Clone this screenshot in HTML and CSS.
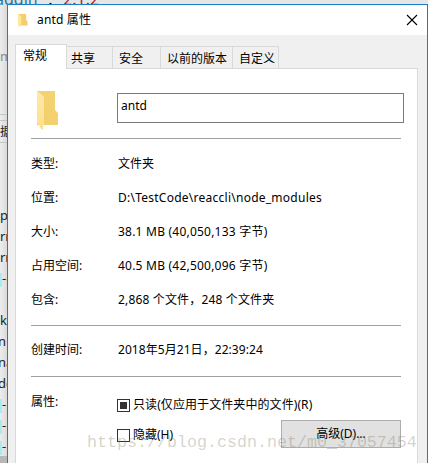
FILE: index.html
```html
<!DOCTYPE html>
<html lang="zh-CN">

<head>
	<meta charset="UTF-8">
	<meta name="viewport" content="width=device-width, initial-scale=1.0">
	<title>antd 属性</title>
	<link rel="stylesheet" href="styles.css">
</head>

<body>

	<!-- editor window behind the dialog -->
	<div class="editor">
		<div class="code-top"><span class="key">addin"</span> : <span class="str">"2.1.2"</span></div>
		<div class="scrap faded" style="top: 46px">m</div>
		<div class="panel-line" style="top: 114px"></div>
		<div class="panel-line" style="top: 120px"></div>
		<div class="scrap cjk" style="top: 121px">据</div>
		<div class="panel-line" style="top: 142px"></div>
		<div class="scrap" style="top: 205px">p</div>
		<div class="scrap" style="top: 226px">rr</div>
		<div class="scrap" style="top: 247px">rr</div>
		<div class="scrap" style="top: 268px"><i></i>-c</div>
		<div class="scrap" style="top: 310px">k</div>
		<div class="scrap cut" style="top: 331px">n</div>
		<div class="scrap cut" style="top: 352px">na</div>
		<div class="scrap cut" style="top: 373px">de</div>
		<div class="scrap" style="top: 394px"><i></i>-</div>
		<div class="scrap" style="top: 415px"><i></i>-</div>
		<div class="scrap" style="top: 436px"><i></i>-</div>
		<div class="scrap selected" style="top: 456px"></div>
	</div>

	<div class="dialog">
		<div class="titlebar">
			<svg class="title-icon" width="10" height="13" viewBox="0 0 22 40" preserveAspectRatio="none">
				<path fill="#f2cf6b" d="M0 0h18v19l3 3v13H0z" />
				<path fill="#ffe69c" d="M0 0l7 6v30l-2 4-5-6z" />
			</svg>
			<span class="title">antd 属性</span>
			<svg class="close" width="12" height="12" viewBox="0 0 12 12">
				<path d="M1 1l10 10M11 1L1 11" stroke="#000" stroke-width="1.1" />
			</svg>
		</div>

		<div class="tabs">
			<div class="tab active">常规</div>
			<div class="tab tab-share">共享</div>
			<div class="tab tab-security">安全</div>
			<div class="tab tab-versions">以前的版本</div>
			<div class="tab tab-custom">自定义</div>
		</div>

		<div class="pane">
			<div class="name-row">
				<svg class="folder" width="22" height="40" viewBox="0 0 22 40">
					<defs>
						<linearGradient id="back" x1="0" y1="1" x2="1" y2="0">
							<stop offset="0" stop-color="#f2cf69" />
							<stop offset="1" stop-color="#f4d375" />
						</linearGradient>
						<linearGradient id="front" x1="0" y1="0" x2="0" y2="1">
							<stop offset="0" stop-color="#ffe9a8" />
							<stop offset="1" stop-color="#fde08a" />
						</linearGradient>
					</defs>
					<path fill="url(#back)" d="M0 0h18v19l3 3v12H0z" />
					<path fill="url(#front)" d="M0 0l5 4 2 2v28l-1 1v4l-2-1-2-4-2-2z" />
				</svg>
				<input class="name" type="text" value="antd">
			</div>
			<div class="line"></div>
			<div class="row row-type"><span class="label">类型:</span><span>文件夹</span></div>
			<div class="row"><span class="label">位置:</span><span class="path">D:\TestCode\reaccli\node_modules</span></div>
			<div class="row"><span class="label">大小:</span><span class="size">38.1 MB (40,050,133 字节)</span></div>
			<div class="row"><span class="label">占用空间:</span><span class="size">40.5 MB (42,500,096 字节)</span></div>
			<div class="row"><span class="label">包含:</span><span class="count">2,868 个文件，248 个文件夹</span></div>
			<div class="line"></div>
			<div class="row row-date"><span class="label">创建时间:</span><span class="date">2018年5月21日，22:39:24</span></div>
			<div class="line"></div>
			<div class="attributes">
				<span class="label">属性:</span>
				<div class="options">
					<div class="option"><span class="check mixed"></span><span class="readonly">只读(仅应用于文件夹中的文件)(R)</span></div>
					<div class="option"><span class="check"></span><span>隐藏(H)</span></div>
				</div>
				<button class="advanced" type="button">高级(D)...</button>
			</div>
		</div>
	</div>

	<div class="watermark">https://blog.csdn.net/m0_37057454</div>

</body>

</html>
```

FILE: styles.css
```css
* {
	box-sizing: border-box;
}

body {
	margin: 0;
	position: relative;
	width: 428px;
	height: 463px;
	overflow: hidden;
	background-color: #e9e9e9;
	font-family: "Noto Sans", "Noto Sans CJK SC", sans-serif;
	font-size: 12px;
	line-height: 18px;
	color: #000;
}

/* editor behind the dialog */
.editor {
	position: absolute;
	inset: 0;
	overflow: hidden;
	background: linear-gradient(to right, #ededed, #d8d8d8 8px, #e6e6e6 20px);
}

.code-top {
	position: absolute;
	top: -10px;
	left: -5px;
	font-size: 16px;
	line-height: 18px;
	white-space: pre;
}

.key {
	color: #2878a0;
}

.str {
	color: #b01830;
}

.scrap {
	position: absolute;
	left: 0;
	width: 8px;
	height: 20px;
	overflow: hidden;
	white-space: nowrap;
	font-size: 13px;
	line-height: 21px;
	color: #222;
}

.scrap i {
	display: inline-block;
	width: 2px;
	height: 14px;
	background-color: #a5ecf4;
	vertical-align: middle;
}

.scrap.cut {
	text-indent: -2px;
}

.scrap.cjk {
	font-size: 12px;
}

.scrap.faded {
	color: #888;
}

.scrap.selected {
	background-color: #b8b8b8;
}

.panel-line {
	position: absolute;
	left: 0;
	width: 8px;
	height: 1px;
	background-color: #c4c4c4;
}

/* dialog */
.dialog {
	position: absolute;
	top: 4px;
	left: 7px;
	width: 421px;
	height: 470px;
	border: 1px solid #1a7fcb;
	background-color: #f0f0f0;
}

.titlebar {
	display: flex;
	align-items: center;
	height: 30px;
	padding: 0 9px 0 10px;
	background-color: #fff;
}

.title {
	margin-left: 9px;
	letter-spacing: 0.15px;
}

.close {
	margin-left: auto;
}

.tabs {
	display: flex;
	align-items: flex-end;
	height: 34px;
	padding-left: 7px;
}

.tab {
	height: 23px;
	padding-top: 3px;
	border: 1px solid #d9d9d9;
	border-left: none;
	border-bottom: none;
	white-space: nowrap;
}

.tab.active {
	z-index: 1;
	width: 52px;
	height: 25px;
	padding: 2px 0 0 7px;
	border-left: 1px solid #d9d9d9;
	background-color: #fff;
}

.tab-share {
	width: 46px;
	padding-left: 4px;
}

.tab-security {
	width: 48px;
	padding-left: 6px;
}

.tab-versions {
	width: 72px;
	padding-left: 6px;
}

.tab-custom {
	width: 46px;
	padding-left: 6px;
}

.pane {
	width: 403px;
	height: 400px;
	margin: -1px 0 0 7px;
	padding: 24px 16px 0 15px;
	border: 1px solid #d9d9d9;
	background-color: #fff;
}

.name-row {
	display: flex;
	height: 45px;
}

.folder {
	flex: none;
	margin: -2px 0 0 6px;
}

.name {
	flex: none;
	width: 287px;
	height: 30px;
	margin-left: 58px;
	padding: 0 3px 6px;
	border: 1px solid #7a7a7a;
	font: inherit;
}

.line {
	height: 1px;
	background-color: #a0a0a0;
}

.row {
	display: flex;
	height: 34px;
}

.label {
	flex: none;
	width: 87px;
}

.path {
	letter-spacing: 0.25px;
}

.size {
	letter-spacing: 0.22px;
}

.count {
	letter-spacing: 0.16px;
}

.date {
	letter-spacing: 0.06px;
}

.readonly {
	letter-spacing: 0.08px;
}

.row-type {
	margin-top: 16px;
}

.row-date {
	height: 35px;
	margin-top: 15px;
}

.attributes {
	display: flex;
	padding-top: 16px;
}

.options {
	width: 163px;
	padding-top: 3px;
}

.option {
	display: flex;
	align-items: center;
	height: 18px;
	margin-bottom: 12px;
	white-space: nowrap;
}

.check {
	flex: none;
	width: 13px;
	height: 13px;
	margin: 0 3px 0 -1px;
	border: 1px solid #333;
	background-color: #fff;
}

.check.mixed {
	padding: 2px;
	background: #333 content-box;
}

.advanced {
	width: 121px;
	height: 28px;
	margin-top: 27px;
	padding: 0;
	border: 1px solid #adadad;
	background-color: #e1e1e1;
	font: inherit;
}

.watermark {
	position: absolute;
	top: 432px;
	left: 87px;
	font-family: "Liberation Mono", monospace;
	font-size: 16.67px;
	line-height: 22px;
	color: rgba(120, 120, 100, 0.32);
	white-space: nowrap;
}
```
